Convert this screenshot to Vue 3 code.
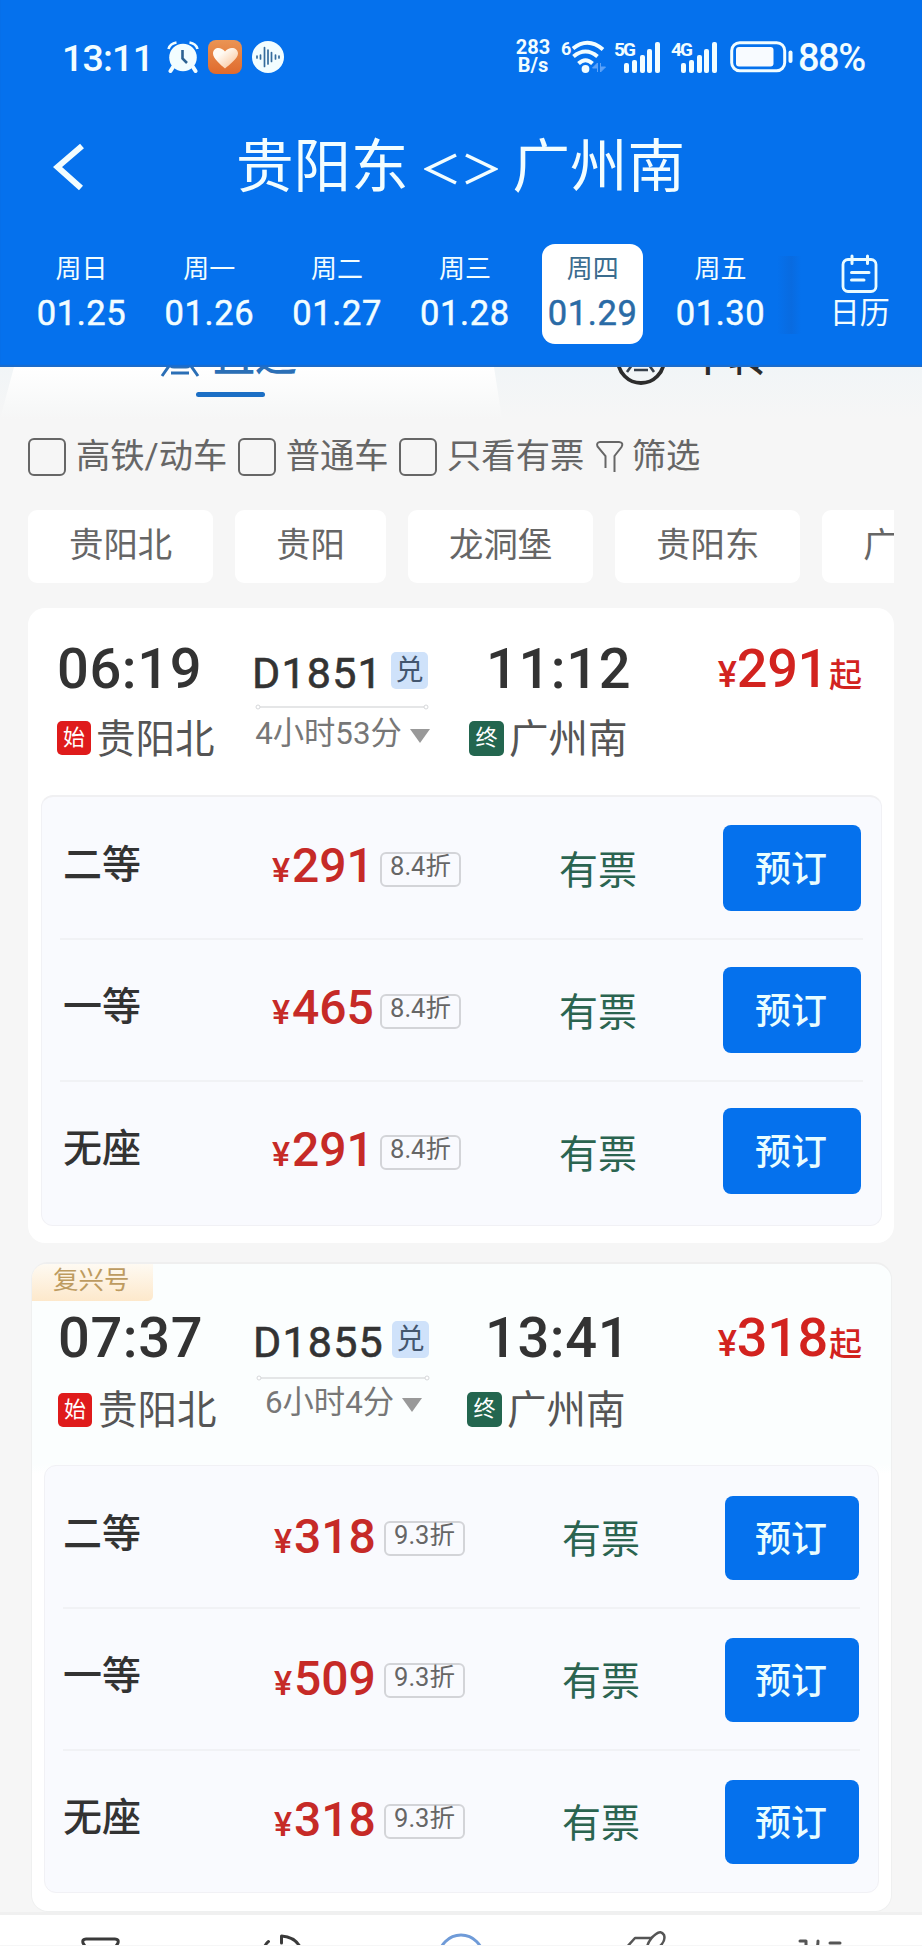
<script setup>
const days = [
  { week: '周日', date: '01.25' },
  { week: '周一', date: '01.26' },
  { week: '周二', date: '01.27' },
  { week: '周三', date: '01.28' },
  { week: '周四', date: '01.29', active: true },
  { week: '周五', date: '01.30' },
]
const bars = [10, 13, 18, 24, 31]
const filters = ['高铁/动车', '普通车', '只看有票']
const stations = ['贵阳北', '贵阳', '龙洞堡', '贵阳东', '广州南']
const trips = [
  {
    depart: '06:19', arrive: '11:12', no: 'D1851', from: '贵阳北', to: '广州南', duration: '4小时53分', price: '291',
    seats: [
      { name: '二等', price: '291', off: '8.4折' },
      { name: '一等', price: '465', off: '8.4折' },
      { name: '无座', price: '291', off: '8.4折' },
    ],
  },
  {
    tag: '复兴号',
    depart: '07:37', arrive: '13:41', no: 'D1855', from: '贵阳北', to: '广州南', duration: '6小时4分', price: '318',
    seats: [
      { name: '二等', price: '318', off: '9.3折' },
      { name: '一等', price: '509', off: '9.3折' },
      { name: '无座', price: '318', off: '9.3折' },
    ],
  },
]
</script>

<template>
  <div class="page">
    <header class="header">
      <div class="status">
        <span class="clock">13:11</span>
        <svg class="alarm" width="32" height="32" viewBox="0 0 32 32">
          <circle cx="16" cy="16.5" r="13.8" fill="#f2fdff" />
          <path d="M1.500 8Q3 2.500 9.500 1.500M30.500 8Q29 2.500 22.500 1.500" fill="none" stroke="#f2fdff" stroke-width="2.600" />
          <path d="M6 26L3.500 30M26 26L28.500 30" stroke="#f2fdff" stroke-width="4" stroke-linecap="round" />
          <path d="M15.500 9V17.500L20 22" fill="none" stroke="#2d6292" stroke-width="2.600" />
        </svg>
        <svg class="heart" width="34" height="34" viewBox="0 0 34 34">
          <defs>
            <linearGradient id="tile" x1="0" y1="0" x2="0" y2="1"><stop offset="0" stop-color="#ea9454" /><stop offset="1" stop-color="#e06a2c" /></linearGradient>
            <linearGradient id="hrt" x1="0" y1="0" x2="1" y2="1"><stop offset="0.300" stop-color="#fffaf2" /><stop offset="1" stop-color="#f9bd8e" /></linearGradient>
          </defs>
          <rect width="34" height="34" rx="8" fill="url(#tile)" />
          <path d="M17 28.500C13 25 5 18.500 5 13.500C5 7 13 6 17 11.500C21 6 30 7 30 13.500C30 18.500 21 25 17 28.500Z" fill="url(#hrt)" />
        </svg>
        <svg class="wave" width="32" height="32" viewBox="0 0 32 32">
          <circle cx="16" cy="16" r="16" fill="#f2fdff" />
          <path d="M5 15v2M8.500 14v4M12.500 6.500v19M16 9v14M19.500 11.500v9M23.500 14v4M27 15v2" stroke="#356c9c" stroke-width="1.700" stroke-linecap="round" />
        </svg>
        <span class="speed"><b>283</b><b>B/s</b></span>
        <svg class="wifi" width="46" height="34" viewBox="0 0 46 34">
          <text x="0" y="15" class="gen">6</text>
          <path d="M12 8.500Q27 -3.500 42 9.500" fill="none" stroke="#f2fdff" stroke-width="4" />
          <path d="M12.500 16.500Q24.500 6.500 36.500 16.500" fill="none" stroke="#f2fdff" stroke-width="4" />
          <path d="M17.500 23.500Q24.500 17 31.500 23.500" fill="none" stroke="#f2fdff" stroke-width="4" />
          <circle cx="24.500" cy="29" r="3.900" fill="#f2fdff" />
          <path d="M36.500 32V23L31.500 28H36.500M39.500 23V32L44.500 27H39.500" fill="#5ca2f8" stroke="#5ca2f8" />
        </svg>
        <div v-for="g in ['5G', '4G']" :key="g" class="signal">
          <b>{{ g }}</b>
          <div class="bars"><i v-for="h in bars" :key="h" :style="{ height: h + 'px' }"></i></div>
        </div>
        <svg class="battery" width="63" height="32" viewBox="0 0 63 32">
          <rect x="1.700" y="1.700" width="53" height="28" rx="8" fill="none" stroke="#f2fdff" stroke-width="3" />
          <rect x="6" y="6" width="37.500" height="19.500" rx="3" fill="#f8fbff" />
          <path d="M60.500 11.500V20" stroke="#f2fdff" stroke-width="4" stroke-linecap="round" />
        </svg>
        <span class="percent">88%</span>
      </div>

      <div class="titlebar">
        <svg class="back" width="34" height="48" viewBox="0 0 34 48">
          <path d="M29 3L4.500 24L28 45" fill="none" stroke="#f2fdff" stroke-width="6" />
        </svg>
        <h1><span>贵阳东</span><svg class="swap" width="74" height="36" viewBox="0 0 74 36"><path d="M32 4L3 18L32 32M42 4L71 18L42 32" fill="none" stroke="#f2fdff" stroke-width="3.600" /></svg><span>广州南</span></h1>
      </div>

      <nav class="dates">
        <div v-for="d in days" :key="d.date" class="day" :class="{ active: d.active }">
          <span class="week">{{ d.week }}</span>
          <span class="date">{{ d.date }}</span>
        </div>
        <div class="edge"></div>
        <div class="calendar">
          <svg width="38" height="40" viewBox="0 0 38 40">
            <rect x="2" y="5.500" width="33" height="32" rx="5" fill="none" stroke="#eafcff" stroke-width="2.800" />
            <path d="M11 2V9.500M26.500 2V9.500M10.500 18.500H28M10.500 26H23" stroke="#eafcff" stroke-width="3" stroke-linecap="round" />
          </svg>
          <span>日历</span>
        </div>
      </nav>
    </header>

    <div class="tabs">
      <div class="tab direct">
        <svg width="40" height="40" viewBox="0 0 40 40">
          <rect x="8" y="2" width="24" height="28" rx="6" fill="none" stroke="#2b6fb6" stroke-width="3" />
          <path d="M9 29L2 39M31 29L38 39M11 36H29" fill="none" stroke="#2b6fb6" stroke-width="3" />
        </svg>
        <span>直达</span>
      </div>
      <div class="tab transfer">
        <svg width="50" height="50" viewBox="0 0 50 50">
          <circle cx="25" cy="25" r="23" fill="none" stroke="#2c2c2c" stroke-width="3.800" />
          <path d="M16 30L11 37M33 30L38 37M18 35H32" fill="none" stroke="#39424c" stroke-width="2.600" />
        </svg>
        <span>中转</span>
      </div>
    </div>

    <div class="filters">
      <label v-for="f in filters" :key="f"><i class="box"></i><span>{{ f }}</span></label>
      <div class="more">
        <svg width="30" height="34" viewBox="0 0 30 34">
          <path d="M10.500 29V17L2.500 7.500Q1 3.500 5 3H24Q29 3.500 26.500 8L19.500 17V33" fill="none" stroke="#666" stroke-width="2" />
        </svg>
        <span>筛选</span>
      </div>
    </div>

    <div class="chips">
      <span v-for="s in stations" :key="s" class="chip">{{ s }}</span>
    </div>

    <section v-for="t in trips" :key="t.no" class="card" :class="{ tagged: t.tag }">
      <span v-if="t.tag" class="tag">{{ t.tag }}</span>
      <div class="head">
        <div class="leg">
          <div class="time">{{ t.depart }}</div>
          <div class="station"><i class="mark start">始</i>{{ t.from }}</div>
        </div>
        <div class="mid">
          <div class="train"><span class="no">{{ t.no }}</span><i class="points">兑</i></div>
          <svg class="rail" width="174" height="6" viewBox="0 0 174 6">
            <path d="M5 3H169" stroke="#dcdedf" stroke-width="1.500" />
            <circle cx="3" cy="3" r="2" fill="#fff" stroke="#d6d8da" />
            <circle cx="171" cy="3" r="2" fill="#fff" stroke="#d6d8da" />
          </svg>
          <div class="duration">{{ t.duration }}<i class="caret"></i></div>
        </div>
        <div class="leg arrive">
          <div class="time">{{ t.arrive }}</div>
          <div class="station"><i class="mark end">终</i>{{ t.to }}</div>
        </div>
        <div class="from"><small>¥</small><b>{{ t.price }}</b><em>起</em></div>
      </div>
      <div class="seats">
        <div v-for="s in t.seats" :key="s.name" class="seat">
          <span class="name">{{ s.name }}</span>
          <span class="fare"><small>¥</small><b>{{ s.price }}</b></span>
          <span class="off">{{ s.off }}</span>
          <span class="left">有票</span>
          <button>预订</button>
        </div>
      </div>
    </section>

    <footer class="tabbar">
      <svg width="922" height="30" viewBox="0 0 922 30" fill="none" stroke="#3a3a3a" stroke-width="3" stroke-linecap="round" stroke-linejoin="round">
        <path d="M88 36L83 28Q82 24 86 24H115Q119 24 118 28L113 36" />
        <path d="M264 34Q265 29 268.500 26.500M281.500 28V21Q296 22 301 34" />
        <circle cx="461" cy="42" r="22" stroke="#6f9bd8" />
        <path d="M626 33L635 23H651M647 32Q649 24 656 19Q661 15 664 20Q666 26 659 32" stroke="#555" stroke-width="2.500" />
        <path d="M800 26H806V33M816 33Q818 32 818 26M830 28H840" stroke="#555" />
      </svg>
    </footer>
  </div>
</template>

<style>
html, body { background: #f6f6f6; overflow: hidden; }
</style>

<style scoped>
* { box-sizing: border-box; }
.page {
  width: 922px; height: 1946px; overflow: hidden; display: flex; flex-direction: column;
  background: #f6f6f6; color: #333;
  font-family: Roboto, "Noto Sans CJK SC", sans-serif;
}
i, em { font-style: normal; }
svg { display: block; flex: none; }
.header { height: 367px; flex: none; background: #0571ed; color: #f2fdff; display: flex; flex-direction: column; box-shadow: inset 0 -2px 1px #1c6cca; }
.status { height: 114px; padding-left: 62px; display: flex; align-items: center; white-space: nowrap; }
.clock { width: 105px; font-size: 37.500px; font-weight: 500; letter-spacing: -.8px; padding-top: 1px; }
.alarm { margin-right: 9px; }
.heart { margin-right: 10px; }
.speed { display: flex; flex-direction: column; align-items: center; width: 38px; margin: -1px 0 0 230px; font-size: 20px; line-height: 17.500px; }
.speed b { font-weight: 700; }
.wifi { margin-left: 9px; }
.gen { font-size: 18px; font-weight: 700; fill: #f2fdff; }
.signal { width: 57px; height: 32px; display: flex; }
.wifi + .signal { margin-left: 7px; }
.signal b { font-size: 19px; line-height: 17px; width: 10px; letter-spacing: -2px; }
.bars { display: flex; align-items: flex-end; gap: 2.800px; height: 32px; }
.bars i { width: 5px; border-radius: 2px; background: #f2fdff; }
.battery { margin-left: 2px; }
.percent { font-size: 38px; font-weight: 500; margin-left: 5px; letter-spacing: -1.500px; padding-top: 1px; }
.titlebar { height: 106px; display: flex; align-items: center; padding-left: 53px; }
.back { margin-top: -1px; }
h1 { margin: 2px 0 0 149px; font-size: 57.500px; line-height: 80px; font-weight: 400; display: flex; align-items: center; }
.swap { margin: 2px 15px 0 15px; }
.dates { height: 147px; display: flex; align-items: flex-start; padding: 24px 0 0 31px; }
.day { width: 101px; height: 100px; margin-right: 26.800px; border-radius: 13px; display: flex; flex-direction: column; align-items: center; }
.week { font-size: 26px; line-height: 38px; margin-top: 6px; }
.date { font-size: 34.500px; line-height: 42px; margin-top: 4px; letter-spacing: .6px; -webkit-text-stroke: .5px currentColor; }
.active { background: #fff; color: #2a6ba6; }
.active .week { color: #3a6c8e; }
.edge { width: 24px; height: 78px; margin: 12px 0 0 -21px; background: linear-gradient(90deg, #0571ed, #096be0 60%, #0571ed); }
.calendar { margin: 10px 0 0 28px; width: 62px; display: flex; flex-direction: column; align-items: center; font-size: 30px; line-height: 38px; }
.tabs { height: 52px; flex: none; overflow: hidden; display: flex; background: linear-gradient(#f1f5f7, #f6f6f6); }
.tab { display: flex; align-items: flex-start; font-size: 42px; line-height: 50px; font-weight: 500; }
.direct { width: 502px; height: 52px; padding-left: 160px; color: #2b6fb6; position: relative; background: linear-gradient(#fff, #f7f8f8 80%, #f6f6f6); clip-path: polygon(14px 0, 494px 0, 502px 52px, 0 52px); }
.direct::after { content: ""; position: absolute; left: 196px; top: 25px; width: 69px; height: 5px; border-radius: 3px; background: #1c6fc5; }
.direct svg { margin-top: -30px; }
.direct span { margin: -35px 0 0 13px; }
.transfer { padding-left: 114px; color: #2c2c2c; font-size: 40px; }
.transfer svg { margin-top: -32px; }
.transfer span { margin: -34px 0 0 22px; }
.filters { height: 74px; flex: none; display: flex; align-items: center; padding: 0 0 0 28px; color: #666; font-size: 34.300px; line-height: 50px; white-space: nowrap; }
.filters label { display: flex; align-items: center; margin-right: 10.400px; }
.box { width: 38px; height: 38px; border: 2.500px solid #666; border-radius: 6px; margin-right: 10px; margin-top: 2px; }
.filters span { margin-top: -1px; }
.more { display: flex; align-items: center; gap: 7px; margin-left: 0; }
.chips { flex: none; margin: 17px 28px 0; height: 73px; display: flex; gap: 22px; overflow: hidden; }
.chip { flex: none; background: #fff; border-radius: 9px; padding: 0 41px; font-size: 34.400px; line-height: 70px; color: #666; }
.card { flex: none; width: 866px; height: 635px; margin: 25px 0 0 28px; border-radius: 17px; background: #fff; padding: 35px 12px 0 13px; position: relative; }
.head { height: 152px; display: flex; }
.leg { width: 195px; padding-left: 16px; }
.time { font-size: 56px; line-height: 52px; font-weight: 500; letter-spacing: .6px; color: #333; white-space: nowrap; }
.station { display: flex; align-items: center; height: 44px; margin-top: 22.500px; font-size: 39.500px; line-height: 44px; color: #555; white-space: nowrap; }
.mark { width: 34px; height: 34px; border-radius: 5px; margin: -3px 5px 0 0; font-size: 22px; line-height: 34px; text-align: center; color: #fff; }
.start { background: #df1b1b; }
.end { background: #23664f; width: 35px; height: 35px; }
.mid { width: 179px; margin: -2px 0 0 15px; display: flex; flex-direction: column; align-items: center; }
.train { width: 177px; height: 48px; margin-top: 5px; display: flex; align-items: center; justify-content: space-between; }
.no { font-size: 43px; line-height: 48px; color: #333; -webkit-text-stroke: .6px #333; padding-top: 5px; letter-spacing: 1.200px; }
.points { width: 37px; height: 37px; border-radius: 5px; background: #cfe2fa; color: #43566f; font-size: 28px; line-height: 38px; text-align: center; margin-right: 1px; }
.rail { margin: 10px 0 0 2px; }
.duration { display: flex; align-items: center; height: 42px; margin: 3px -4px 0 0; font-size: 31.300px; line-height: 42px; color: #777; white-space: nowrap; }
.caret { border: 10px solid transparent; border-top: 14px solid #999; border-bottom: 0; margin-left: 8px; margin-top: 4px; }
.arrive { margin-left: 22px; padding-left: 17px; width: 220px; }
.arrive .time { padding-left: 17px; }
.from { flex: 1; display: flex; align-items: baseline; justify-content: flex-end; color: #d2231f; padding-right: 20px; height: 60px; line-height: 52px; white-space: nowrap; }
.from small { font-size: 36px; font-weight: 500; }
.from b { font-size: 54px; font-weight: 500; letter-spacing: -.3px; }
.from em { font-size: 33px; font-weight: 500; margin-left: 1px; }
.seats { height: 431px; border-radius: 12px; background: #f9fafe; border: 1px solid #f1f1f5; border-top: 2px solid #f0f0f2; padding: 0 18px; }
.seat { height: 141.300px; display: flex; align-items: center; padding-left: 3px; }
.seat + .seat { border-top: 2px solid #f1f2f5; }
.name { width: 209px; font-size: 39px; font-weight: 500; line-height: 50px; margin-top: -5px; color: #333; }
.fare { width: 108px; display: flex; align-items: baseline; color: #c62a27; line-height: 50px; margin-top: 1px; }
.fare small { font-size: 34px; font-weight: 500; width: 20px; }
.fare b { font-size: 48px; font-weight: 500; }
.off { width: 81px; height: 35px; margin-top: 3px; border: 2px solid #d3d4d8; border-radius: 6px; font-size: 25.500px; line-height: 24px; text-align: center; color: #666; }
.left { width: 163px; margin: 7px 0 0 98px; font-size: 39px; line-height: 50px; color: #2b6450; }
.seat button { width: 138px; height: 86px; border: 0; border-radius: 8px; padding: 4px 2px 0 0; background: #0571ed; color: #e9fdff; font: 500 36px/1 Roboto, "Noto Sans CJK SC", sans-serif; flex: none; margin-left: 1px; }
.tagged { width: 861px; height: 650px; margin: 19px 0 0 31px; padding: 48px 12px 0 12px; background: linear-gradient(#fbfefe 200px, #fff 210px); border: 1px solid #eff0f0; border-top: 2px solid #efefef; }
.tagged .head { height: 153px; }
.tag { position: absolute; left: 0; top: 0; width: 121px; height: 37px; border-radius: 14px 0 5px 0; background: linear-gradient(#fefaf2, #fde8cb); color: #bd9b60; font-size: 25.500px; line-height: 33px; padding-left: 21px; }
.tagged .leg { padding-left: 14px; width: 193px; }
.tagged .station { margin-top: 25px; }
.tagged .start { margin-right: 6px; }
.tagged .rail { margin-top: 12px; }
.tagged .duration { margin-top: 1px; }
.tagged .arrive { margin-left: 22px; width: 220px; }
.tagged .arrive .time { padding-left: 18px; }
.tagged .from { padding-right: 17px; }
.tagged .seats { height: 428px; border-top: 1px solid #f1f1f5; }
.tagged .seat { padding-left: 0; }
.tagged .name { width: 211px; }
.tagged .fare { margin-top: 4px; width: 110px; }
.tagged .left { width: 162px; margin-left: 97px; }
.tagged .seat button { width: 134px; height: 84px; margin-top: 3px; }
.tabbar { flex: none; height: 33px; background: #fff; border-top: 3px solid #f0f0f0; }
</style>
